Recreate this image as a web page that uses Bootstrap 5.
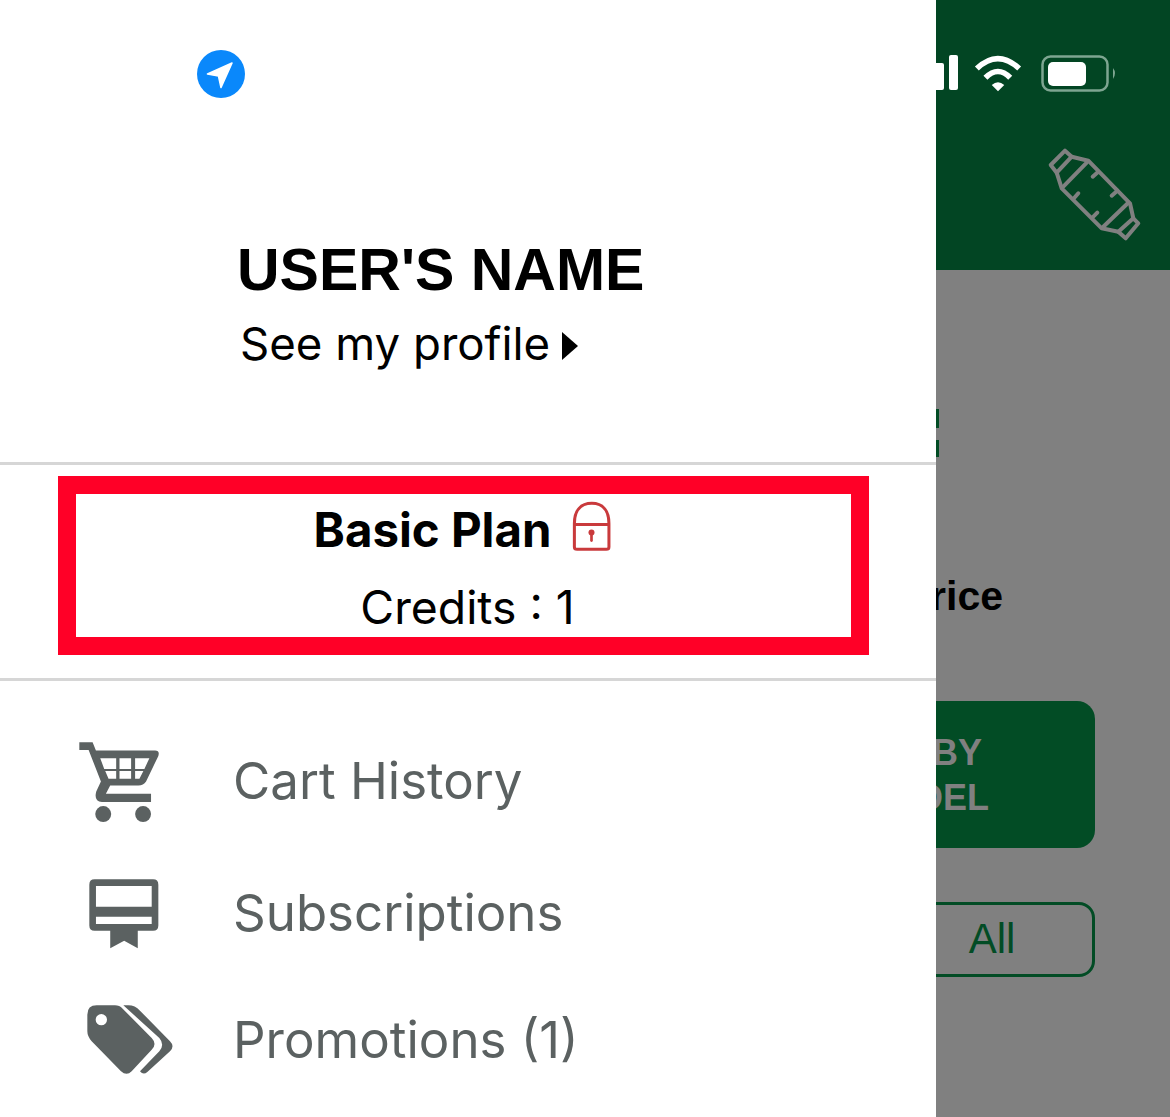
<!DOCTYPE html>
<html lang="en">
<head>
    <meta charset="UTF-8">
    <meta name="viewport" content="width=device-width, initial-scale=1.0">
    <title>Side menu</title>
    <link href="https://cdn.jsdelivr.net/npm/bootstrap@5.3.0/dist/css/bootstrap.min.css" rel="stylesheet">
    <style>
        html, body { margin: 0; height: 1117px; overflow: hidden; background: #fff; }
        body { font-family: Inter, "Liberation Sans", sans-serif; }
        .stage { width: 1170px; height: 1117px; }

        /* drawer */
        .drawer { width: 936px; flex: none; background: #fff; }
        .drawer-top { height: 462px; }
        .loc-icon { display: block; margin: 50px 0 0 197px; }
        .user-name { margin: 138px 0 0 237px; font: bold 59px/68px "Liberation Sans", sans-serif; color: #000; }
        .profile-link { margin: 12px 0 0 240px; font-size: 45.6px; line-height: 56px; color: #000; }
        .profile-link svg { margin-left: 12px; vertical-align: 0; }
        .rule { height: 3px; background: #d6d6d6; }
        .plan-box { margin: 11px 67px 0 58px; height: 179px; border: 18px solid #ff0027; text-align: center; }
        .plan-name { height: 72px; gap: 20px; font-size: 47.4px; font-weight: 700; color: #000; }
        .plan-lock { margin-bottom: 8px; }
        .plan-credits { font-size: 46.3px; line-height: 56px; color: #000; margin: 13px 0 0 8px; }
        .plan-box + .rule { margin-top: 23px; }
        .menu-row { height: 130px; font-size: 51px; color: #5b6161; }
        .menu-slot { width: 233px; flex: none; }
        .row-cart { margin-top: 35px; }
        .row-card { margin-top: 2px; }
        .row-tags { margin-top: -3px; }
        .slot-cart { padding-left: 77px; }
        .slot-card { padding-left: 87px; }
        .slot-tags { padding-left: 85px; }

        /* page behind the drawer, dimmed */
        .behind { flex: 1; min-width: 0; overflow: hidden; background: #808080; }
        .behind-head { height: 270px; background: #024523; position: relative; }
        .status-row { height: 147px; padding: 55px 52px 0 0; }
        .status-row svg { flex: none; }
        .sig-icon { margin-right: 13px; }
        .wifi-icon { margin-right: 18px; }
        .bottle { position: absolute; left: 109px; top: 145px; }
        .behind-body { margin-left: -300px; padding-right: 75px; }
        .clip-frag { width: 303px; padding-top: 139px; }
        .clip-frag i { display: block; width: 3px; margin-left: auto; background: #024c25; }
        .clip-frag i:first-child { height: 19px; margin-bottom: 12px; }
        .clip-frag i:last-child { height: 17px; }
        .price-label { margin-top: 116px; width: 367px; height: 46px; font: bold 41px/46px "Liberation Sans", sans-serif; color: #000; text-align: right; white-space: nowrap; }
        .by-model { display: block; margin: 82px 0 0 131px; width: 328px; height: 147px; padding: 29px 14px 0 0; border-radius: 18px; background: #024c25; color: #808080; font: bold 36px/45px "Liberation Sans", sans-serif; text-align: center; }
        .all-btn { display: block; margin: 54px 0 0 253px; width: 206px; height: 75px; border: 3px solid #024c25; border-radius: 16px; color: #024c25; font: 42px/68px "Liberation Sans", sans-serif; text-align: center; }
    </style>
</head>
<body>
<div class="stage d-flex">
    <div class="drawer">
        <div class="drawer-top overflow-hidden">
            <svg class="loc-icon" width="48" height="48" viewBox="0 0 48 48">
                <circle cx="24" cy="24" r="24" fill="#0a88fb"/>
                <path d="M10.5 24 L35 13 L24 37.5 L21.5 26 Z" fill="#fff" stroke="#fff" stroke-width="1.6" stroke-linejoin="round"/>
            </svg>
            <div class="user-name">USER'S NAME</div>
            <div class="profile-link">See my profile<svg width="16" height="28" viewBox="0 0 16 28"><path d="M0 0 L16 14 L0 28 Z" fill="#000"/></svg></div>
        </div>
        <div class="rule"></div>
        <div class="plan-box">
            <div class="plan-name d-flex justify-content-center align-items-center">
                <span>Basic Plan</span>
                <svg class="plan-lock" width="42" height="52" viewBox="95 55 125 155">
                    <path d="M105 128 V125 C105 85 125 65 157 65 C188 65 208 85 208 125 V195 Q208 202 200 202 H113 Q105 202 105 195 Z M105 128 H208" fill="none" stroke="#c93a3c" stroke-width="9"/>
                    <circle cx="156" cy="152" r="9" fill="#c93a3c"/>
                    <path d="M156 152 V176" stroke="#c93a3c" stroke-width="8" stroke-linecap="round"/>
                </svg>
            </div>
            <div class="plan-credits">Credits : 1</div>
        </div>
        <div class="rule"></div>

        <div class="menu-row row-cart d-flex align-items-center">
            <div class="menu-slot slot-cart">
                <svg class="d-block" width="83" height="83" viewBox="50 55 250 250">
                    <path fill-rule="evenodd" fill="#5b6161" d="M57 62 H97 L107 87 H285 Q300 87 295 103 L258 180 Q250 192 235 192 H150 L137 217 H273 V242 H125 Q100 240 108 210 L122 180 L85 85 H57 Z M120 110 H168 V142 H132 Z M178 110 H213 V142 H178 Z M225 110 H268 L253 142 H225 Z M135 148 H168 V172 H145 Z M178 148 H213 V172 H178 Z M225 148 H250 L238 172 H225 Z"/>
                    <circle cx="129" cy="278" r="24" fill="#5b6161"/>
                    <circle cx="249" cy="278" r="24" fill="#5b6161"/>
                </svg>
            </div>
            <span>Cart History</span>
        </div>
        <div class="menu-row row-card d-flex align-items-center">
            <div class="menu-slot slot-card">
                <svg class="d-block" width="73" height="73" viewBox="80 470 220 220">
                    <path fill-rule="evenodd" fill="#5b6161" d="M103 477 H279 Q295 477 295 493 V616 Q295 632 279 632 H233 V685 L192 662 L150 685 V632 H103 Q87 632 87 616 V493 Q87 477 103 477 Z M107 497 V560 H275 V497 Z M107 590 V612 H275 V590 Z"/>
                </svg>
            </div>
            <span>Subscriptions</span>
        </div>
        <div class="menu-row row-tags d-flex align-items-center">
            <div class="menu-slot slot-tags">
                <svg class="d-block" width="90" height="75" viewBox="75 845 270 225">
                    <path fill-rule="evenodd" fill="#5b6161" d="M82 880 Q82 852 110 852 H165 Q178 852 188 862 L275 950 Q292 968 275 985 L215 1050 Q200 1065 183 1050 L95 960 Q82 945 82 930 Z M124 878 A17 17 0 1 0 124 912 A17 17 0 1 0 124 878 Z"/>
                    <path fill="#5b6161" d="M190 852 H205 Q225 852 240 868 L330 960 Q345 975 330 990 L262 1052 Q250 1062 240 1050 L298 990 Q315 970 298 950 Z"/>
                </svg>
            </div>
            <span>Promotions (1)</span>
        </div>
    </div>

    <div class="behind">
        <div class="behind-head">
            <div class="status-row d-flex justify-content-end align-items-start">
                <svg class="sig-icon" width="24" height="36" viewBox="0 0 24 36">
                    <rect x="-6" y="8" width="14" height="27" rx="2" fill="#fff"/>
                    <rect x="13" y="0" width="9" height="35" rx="2" fill="#fff"/>
                </svg>
                <svg class="wifi-icon" width="50" height="37" viewBox="222 74 148 112">
                    <path d="M232 115 Q295 55 360 115 M258 143 Q296 105 333 143" fill="none" stroke="#fff" stroke-width="17"/>
                    <path d="M277 165 Q296 148 315 165 L296 184 Z" fill="#fff"/>
                </svg>
                <svg width="77" height="38" viewBox="0 0 77 38">
                    <rect x="1.5" y="1.5" width="65" height="34" rx="8" fill="none" stroke="#7ea591" stroke-width="2.5"/>
                    <rect x="7" y="7" width="38" height="24" rx="5" fill="#fff"/>
                    <path d="M72 13 Q76 18 72 24 Z" fill="#7ea591"/>
                </svg>
            </div>
            <svg class="bottle" width="100" height="100" viewBox="0 0 100 100" fill="none" stroke="#808080" stroke-width="4" stroke-linejoin="round" stroke-linecap="round">
                <path d="M20 5.7 L5.7 20 L11.7 27.7 L26.7 11.7 Z M73.3 86.7 L80.7 93.3 L93.3 78.3 L88.3 73.3 Z"/>
                <path d="M26.7 11.7 L43.3 15.7 L85 58.3 L88.3 73.3 M73.3 86.7 L56.7 83.3 L16.7 43.3 L11.7 27.7"/>
                <path d="M18.3 41.7 L41.7 17.7 M58.3 81.7 L83.3 57.7 M53.3 26.7 L47.7 31.7 M72.3 45.7 L66.7 50.7 M33.3 48.3 L28.3 54 M52.3 67.7 L47.3 72.7"/>
            </svg>
        </div>
        <div class="behind-body">
            <div class="clip-frag"><i></i><i></i></div>
            <div class="price-label">Sort by Price</div>
            <div class="by-model">GO BY<br>MODEL</div>
            <div class="all-btn">All</div>
        </div>
    </div>
</div>
<script src="https://cdn.jsdelivr.net/npm/bootstrap@5.3.0/dist/js/bootstrap.bundle.min.js"></script>
</body>
</html>
